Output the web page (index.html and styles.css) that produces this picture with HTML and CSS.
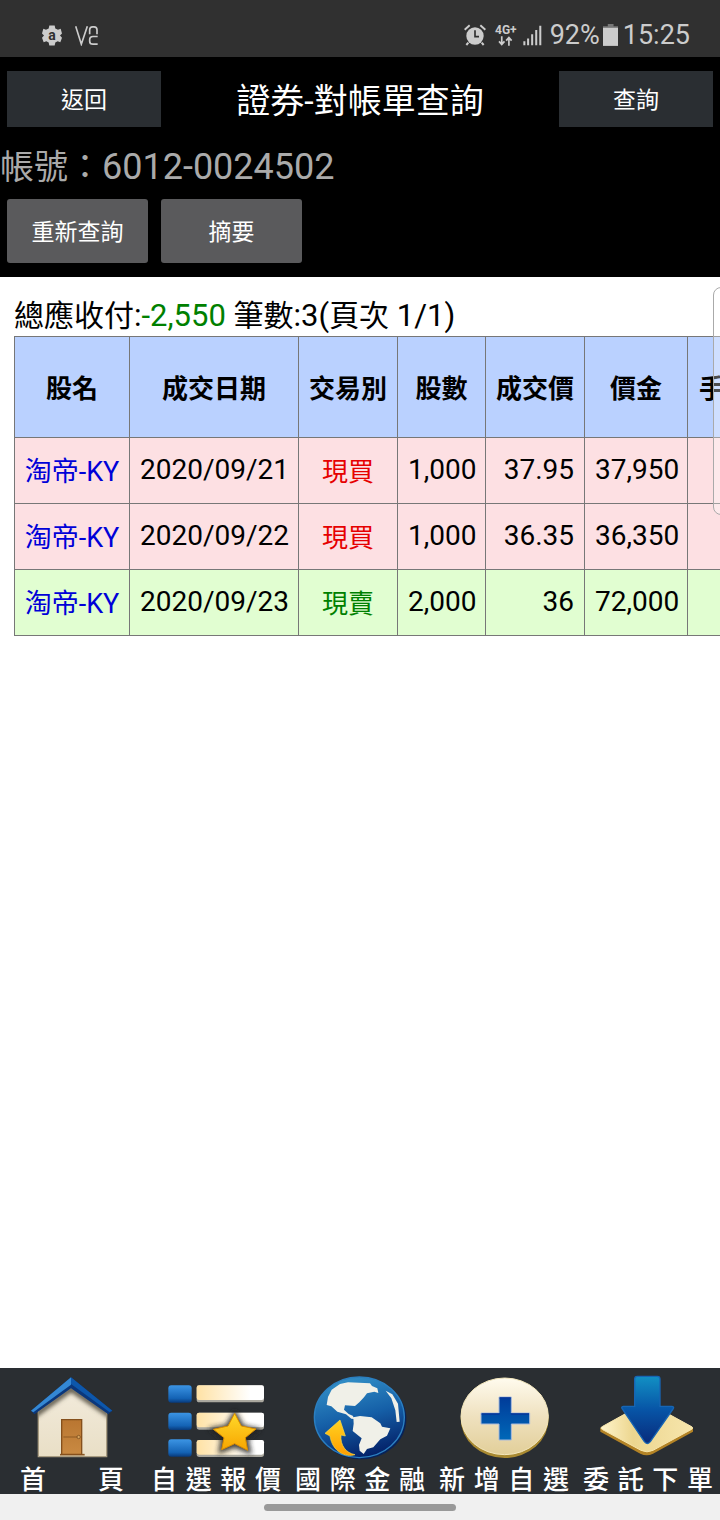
FILE: index.html
```html
<!DOCTYPE html>
<html lang="zh-Hant">
<head>
  <meta charset="UTF-8" />
  <meta name="viewport" content="width=device-width, initial-scale=1.0" />
  <title>證券-對帳單查詢</title>
  <link rel="stylesheet" href="styles.css">
</head>
<body>

  <div class="status-bar">
    <div class="status-left">
      <svg class="icon-gear" viewBox="0 0 60 62">
        <path d="M22 1h16l2 9 8 4 8-3 4 14-6 6 6 7-5 13-8-3-7 4-2 9H22l-2-9-7-4-8 3-5-13 6-7-6-6 4-14 8 3 8-4z" fill="#ccc" />
        <text x="30" y="44" text-anchor="middle" class="gear-letter">a</text>
      </svg>
      <svg class="icon-carrier" viewBox="0 0 72 62">
        <path d="M2 3l17 54L37 3M44 27V14q0-9 9-9h4q9 0 9 9v13M68 34H54q-10 0-10 10v4q0 9 10 9h14" fill="none" stroke="#ccc" stroke-width="5" />
      </svg>
    </div>
    <div class="status-right">
      <svg class="icon-alarm" viewBox="0 0 66 66">
        <circle cx="33" cy="36" r="26" fill="#ccc" />
        <path d="M2 17L17 4M64 17L49 4M13 56l-6 7M53 56l6 7" stroke="#ccc" stroke-width="6" fill="none" />
        <path d="M33 19v19h12" stroke="#303030" stroke-width="5" fill="none" />
      </svg>
      <div class="network">
        <span>4G+</span>
        <svg class="icon-data" viewBox="0 0 44 28">
          <path d="M11 0v22M3 15l8 9 8-9M32 28V6M24 13l8-9 8 9" stroke="#ccc" stroke-width="5" fill="none" />
        </svg>
      </div>
      <svg class="icon-signal" viewBox="0 0 56 62">
        <path d="M4 48v12M15 40v20M27 27v33M39 15v45M51 2v58" stroke="#ccc" stroke-width="6" />
      </svg>
      <span class="battery-level">92%</span>
      <svg class="icon-battery" viewBox="0 0 44 64">
        <path d="M14 0h17v6h13v8H0V6h14z" fill="#777" />
        <path d="M0 11h44v53H0z" fill="#ccc" />
      </svg>
      <span>15:25</span>
    </div>
  </div>

  <header class="header">
    <div class="title-bar">
      <button type="button" class="btn">返回</button>
      <h1>證券-對帳單查詢</h1>
      <button type="button" class="btn">查詢</button>
    </div>
    <p class="account">帳號：<span class="account-no">6012-0024502</span></p>
    <div class="actions">
      <button type="button" class="btn-action">重新查詢</button>
      <button type="button" class="btn-action">摘要</button>
    </div>
  </header>

  <main class="content">
    <p class="summary">總應收付<span class="num">:<span class="sell">-2,550</span> </span>筆數<span class="num">:3(</span>頁次<span class="num"> 1/1)</span></p>
    <table class="statement">
      <thead>
        <tr>
          <th class="col-name">股名</th>
          <th class="col-date">成交日期</th>
          <th class="col-type">交易別</th>
          <th class="col-shares">股數</th>
          <th class="col-price">成交價</th>
          <th class="col-amount">價金</th>
          <th class="col-fee">手續費</th>
        </tr>
      </thead>
      <tbody>
        <tr class="row-buy">
          <td class="name"><a href="#">淘帝-KY</a></td>
          <td>2020/09/21</td>
          <td class="type buy">現買</td>
          <td>1,000</td>
          <td>37.95</td>
          <td>37,950</td>
          <td></td>
        </tr>
        <tr class="row-buy">
          <td class="name"><a href="#">淘帝-KY</a></td>
          <td>2020/09/22</td>
          <td class="type buy">現買</td>
          <td>1,000</td>
          <td>36.35</td>
          <td>36,350</td>
          <td></td>
        </tr>
        <tr class="row-sell">
          <td class="name"><a href="#">淘帝-KY</a></td>
          <td>2020/09/23</td>
          <td class="type sell">現賣</td>
          <td>2,000</td>
          <td>36</td>
          <td>72,000</td>
          <td></td>
        </tr>
      </tbody>
    </table>
    <div class="edge-panel"></div>
  </main>

  <nav class="tab-bar">
    <a href="#" class="tab">
      <svg class="tab-icon" viewBox="66 42 300 258">
        <defs>
          <linearGradient id="wall" x1="0" y1="0" x2="0" y2="1">
            <stop offset="0" stop-color="#f2ebdc" />
            <stop offset="1" stop-color="#e9dfc6" />
          </linearGradient>
          <linearGradient id="door" x1="0" y1="0" x2="0" y2="1">
            <stop offset="0" stop-color="#b97631" />
            <stop offset="1" stop-color="#c98a42" />
          </linearGradient>
          <clipPath id="wall-clip">
            <path d="M115 150l98-75 107 75v140H115z" />
          </clipPath>
          <filter id="eaves" x="-20%" y="-20%" width="140%" height="140%">
            <feGaussianBlur stdDeviation="7" />
          </filter>
        </defs>
        <path d="M115 150l98-75 107 75v140H115z" fill="url(#wall)" stroke="#a99d82" stroke-width="4" />
        <g clip-path="url(#wall-clip)">
          <path d="M95 172L213 87l125 85" fill="none" stroke="#5c5648" stroke-width="16" filter="url(#eaves)" />
        </g>
        <path d="M180 284h74" stroke="#8a5a26" stroke-width="5" />
        <path d="M185 179h60v104h-60z" fill="url(#door)" stroke="#85501c" stroke-width="4" />
        <path d="M190 231h50" stroke="#8f5a22" stroke-width="3" />
        <circle cx="236" cy="231" r="5" fill="#d9a55e" stroke="#6d4216" stroke-width="2" />
        <path d="M213 52L93 152l10 11L213 85l112 78 12-11z" fill="#0b377b" />
        <path d="M213 52L93 152l7 5L213 74z" fill="#3488d4" />
        <path d="M213 52l124 100-9 4L213 72z" fill="#0d57ab" />
      </svg>
      <span class="tab-label tab-label-short">首 頁</span>
    </a>
    <a href="#" class="tab">
      <svg class="tab-icon" viewBox="48 42 300 258">
        <defs>
          <linearGradient id="bullet" x1="0" y1="0" x2="0" y2="1">
            <stop offset="0" stop-color="#3b94e4" />
            <stop offset="0.75" stop-color="#1463b5" />
            <stop offset="1" stop-color="#083a7c" />
          </linearGradient>
          <linearGradient id="bar">
            <stop offset="0" stop-color="#ffe2a5" />
            <stop offset="0.8" stop-color="#fff" />
          </linearGradient>
          <linearGradient id="star" x1="0" y1="0" x2="0" y2="1">
            <stop offset="0" stop-color="#ffd92a" />
            <stop offset="1" stop-color="#f7a500" />
          </linearGradient>
          <filter id="shade" x="-30%" y="-30%" width="160%" height="160%">
            <feGaussianBlur stdDeviation="8" />
          </filter>
        </defs>
        <g fill="url(#bullet)">
          <rect x="55" y="76" width="70" height="52" rx="9" />
          <rect x="55" y="158" width="70" height="52" rx="9" />
          <rect x="55" y="238" width="70" height="52" rx="9" />
        </g>
        <g fill="#aaa89f">
          <rect x="140" y="76" width="202" height="51" rx="8" />
          <rect x="140" y="158" width="202" height="51" rx="8" />
          <rect x="140" y="240" width="202" height="51" rx="8" />
        </g>
        <g fill="url(#bar)">
          <rect x="140" y="76" width="202" height="44" rx="7" />
          <rect x="140" y="158" width="202" height="44" rx="7" />
          <rect x="140" y="240" width="202" height="44" rx="7" />
        </g>
        <path d="M254 148l27 48 53 10-38 32 10 47-52-22-50 20 8-47-38-32 54-10z" fill="#222" opacity="0.85" filter="url(#shade)" />
        <path d="M254 160l20 38 44 9-32 26 7 38-39-20-39 18 7-36-32-25 44-10z" fill="url(#star)" stroke="#d98c00" stroke-width="3" stroke-linejoin="round" />
      </svg>
      <span class="tab-label">自 選 報 價</span>
    </a>
    <a href="#" class="tab">
      <svg class="tab-icon" viewBox="60 42 300 258">
        <defs>
          <linearGradient id="sea" x1="0.3" y1="0" x2="0.6" y2="1">
            <stop offset="0" stop-color="#3391c8" />
            <stop offset="0.5" stop-color="#155fa7" />
            <stop offset="1" stop-color="#031f66" />
          </linearGradient>
          <linearGradient id="turn" x1="0" y1="0" x2="0" y2="1">
            <stop offset="0" stop-color="#ffd321" />
            <stop offset="1" stop-color="#ff9d00" />
          </linearGradient>
        </defs>
        <ellipse cx="212" cy="177" rx="137" ry="121" fill="#06225a" />
        <ellipse cx="208" cy="172" rx="135" ry="121" fill="url(#sea)" stroke="#2b7fc0" stroke-width="4" />
        <path d="M110 135l4-24 11-22 25-17 24-5 66 3 6 8 16 7 3 14-12-4-22 5-9 12-14 15-13 11-30-2-3 13 14 13 12 5 6 10-10-1-16-13-26-8-18-16z" fill="#f0f0e8" />
        <path d="M190 172l20-4 35 4 26 18 5 10 25 5-10 22-20 11-21 24-19 5-10 15-12-10-2-17 8-20-27-22 3-22z" fill="#f0f0e8" />
        <path d="M287 92l20 11 17 28 5 54-9 1-4-35-12-36z" fill="#f0f0e8" />
        <path d="M150 180l16 48-13-3c-3 31 15 54 42 59-29 9-68-9-75-56l-15-8z" fill="url(#turn)" stroke="#f9dc48" stroke-width="2" />
      </svg>
      <span class="tab-label">國 際 金 融</span>
    </a>
    <a href="#" class="tab">
      <svg class="tab-icon" viewBox="72 42 300 258">
        <defs>
          <linearGradient id="coin" x1="0" y1="0" x2="0" y2="1">
            <stop offset="0" stop-color="#fffbee" />
            <stop offset="0.5" stop-color="#efe1bf" />
            <stop offset="1" stop-color="#e2cf99" />
          </linearGradient>
          <linearGradient id="plus" x1="0" y1="0" x2="0" y2="1">
            <stop offset="0" stop-color="#003b99" />
            <stop offset="1" stop-color="#0068b8" />
          </linearGradient>
        </defs>
        <ellipse cx="224" cy="176" rx="132" ry="118" fill="#a98a32" />
        <ellipse cx="224" cy="169" rx="131" ry="115" fill="url(#coin)" stroke="#f3e7bd" stroke-width="3" />
        <path d="M207 111h37v48h55v33h-55v48h-37v-48h-54v-33h54z" fill="url(#plus)" stroke="#a9bada" stroke-width="3" />
        <path d="M209 114h33M155 162h53M243 162h54" stroke="#06379b" stroke-width="5" />
      </svg>
      <span class="tab-label">新 增 自 選</span>
    </a>
    <a href="#" class="tab">
      <svg class="tab-icon" viewBox="84 42 300 258">
        <defs>
          <linearGradient id="plate">
            <stop offset="0" stop-color="#fff4cb" />
            <stop offset="0.35" stop-color="#ecd68f" />
            <stop offset="1" stop-color="#f7e6ad" />
          </linearGradient>
          <linearGradient id="down" x1="0" y1="0" x2="0" y2="1">
            <stop offset="0" stop-color="#1290c4" />
            <stop offset="0.5" stop-color="#0754a6" />
            <stop offset="1" stop-color="#082b7b" />
          </linearGradient>
        </defs>
        <path d="M91 203v12l120 66q19 10 38 0l120-66v-12z" fill="#b38326" />
        <path d="M98 199l114-63q18-8 36 0l115 63q10 5 0 10l-114 62q-18 9-36 0L98 209q-10-5 0-10z" fill="url(#plate)" stroke="#f8e6ac" stroke-width="3" />
        <path d="M202 49h60q8 0 8 8v82h36q8 1 3 8l-68 98q-9 11-18 0l-66-98q-5-7 3-8h34V57q0-8 8-8z" fill="url(#down)" stroke="#1765b4" stroke-width="4" />
      </svg>
      <span class="tab-label">委 託 下 單</span>
    </a>
  </nav>

  <div class="gesture-bar"><div class="gesture-handle"></div></div>

</body>
</html>
```
FILE: styles.css
```css
* {
  box-sizing: border-box;
}

body {
  margin: 0;
  min-height: 100vh;
  display: flex;
  flex-direction: column;
  overflow-x: hidden;
  background: #fff;
  color: #000;
  font-family: Roboto, "Noto Sans CJK TC", sans-serif;
}

p, h1 {
  margin: 0;
}

svg {
  display: block;
}

/* phone status bar */
.status-bar {
  display: flex;
  justify-content: space-between;
  align-items: center;
  height: 57px;
  padding: 13px 30px 0 42px;
  background: #303030;
  color: #ccc;
  font-size: 27px;
}

.status-left, .status-right {
  display: flex;
  align-items: center;
}

.status-left {
  gap: 13px;
}

.icon-gear {
  width: 20px;
  height: 21px;
}

.gear-letter {
  font: bold 42px Roboto, sans-serif;
  fill: #303030;
}

.icon-carrier {
  width: 24px;
  height: 21px;
}

.icon-alarm {
  width: 22px;
  height: 22px;
  margin-right: 9px;
}

.network {
  display: flex;
  flex-direction: column;
  align-items: center;
  margin-right: 6px;
  font-size: 12px;
  font-weight: bold;
  line-height: 12px;
}

.icon-data {
  width: 15px;
  height: 10px;
}

.icon-signal {
  width: 19px;
  height: 21px;
  margin-right: 8px;
}

.icon-battery {
  width: 15px;
  height: 22px;
  margin: 0 5px 0 3px;
}

/* header */
.header {
  padding: 14px 7px;
  background: #000;
}

.title-bar {
  display: flex;
  justify-content: space-between;
  align-items: center;
}

.title-bar h1 {
  padding-top: 4px;
  color: #fff;
  font-size: 34px;
  font-weight: normal;
  line-height: 40px;
}

.btn, .btn-action {
  padding: 0 0 2px;
  border: none;
  color: #fff;
  font-family: inherit;
  font-size: 23px;
  cursor: pointer;
}

.btn {
  width: 154px;
  height: 56px;
  background: #2a2e32;
}

.account {
  margin: 16px -7px 8px;
  color: #aaa;
  font-size: 34px;
  line-height: 48px;
}

.account-no {
  font-size: 36px;
}

.actions {
  display: flex;
  gap: 13px;
}

.btn-action {
  width: 141px;
  height: 64px;
  background: #5a5a5c;
  border-radius: 3px;
}

/* statement */
.content {
  position: relative;
  flex: 1;
  padding: 19px 0 0 14px;
  overflow: hidden;
}

.summary {
  font-size: 30px;
  line-height: 40px;
}

.summary .num {
  font-size: 31px;
}

.buy {
  color: #e60000;
}

.sell {
  color: #008000;
}

.statement {
  table-layout: fixed;
  width: 774px;
  border-collapse: collapse;
  border: 1px solid #444;
}

.statement th, .statement td {
  height: 66px;
  padding: 0 10px 2px;
  border: 1px solid #777;
  font-size: 28px;
  text-align: right;
  white-space: nowrap;
}

.statement th {
  height: 101px;
  padding: 0 0 2px;
  background: #bad1ff;
  font-size: 26px;
  text-align: center;
}

.statement .name, .statement .type {
  padding: 0 0 2px;
  font-size: 26px;
  text-align: center;
}

.statement .name {
  font-size: 27px;
}

.statement .name a {
  color: #0000d8;
  text-decoration: none;
}

.col-name { width: 115px; }
.col-date { width: 169px; }
.col-type { width: 99px; }
.col-shares { width: 88px; }
.col-price { width: 99px; }
.col-amount { width: 103px; }
.col-fee { width: 101px; }

.row-buy {
  background: #fde0e3;
}

.row-sell {
  background: #e1fed1;
}

.edge-panel {
  position: absolute;
  top: 10px;
  right: -13px;
  width: 20px;
  height: 228px;
  border: 1px solid #aaa;
  border-radius: 8px;
  background: rgba(255, 255, 255, 0.3);
}

/* bottom tabs */
.tab-bar {
  display: grid;
  grid-template-columns: repeat(5, 1fr);
  padding: 6px 0 0;
  background: #2a2e32;
}

.tab {
  display: flex;
  flex-direction: column;
  align-items: center;
  color: #fff;
  text-decoration: none;
}

.tab-icon {
  width: 100px;
  height: 86px;
}

.tab-label {
  width: 130px;
  height: 34px;
  font-size: 26px;
  font-weight: 500;
  line-height: 40px;
  white-space: nowrap;
  text-align-last: justify;
}

.tab-label-short {
  width: 104px;
}

.gesture-bar {
  display: flex;
  justify-content: center;
  align-items: center;
  height: 26px;
  background: #f0f0f0;
}

.gesture-handle {
  width: 192px;
  height: 7px;
  border-radius: 4px;
  background: #999;
}
```
